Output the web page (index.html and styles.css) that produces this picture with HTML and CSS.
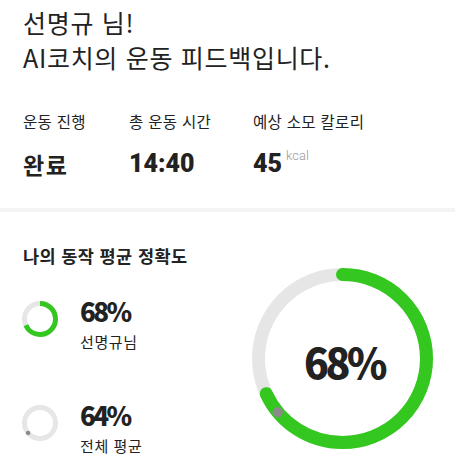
FILE: index.html
```html
<!DOCTYPE html>
<html lang="ko">
<head>
    <meta charset="UTF-8">
    <meta name="viewport" content="width=device-width, initial-scale=1.0">
    <title>AI코치 피드백</title>
    <link rel="stylesheet" href="styles.css">
</head>
<body>

<section class="summary">
    <h1 class="title">선명규 님!<br>AI코치의 운동 피드백입니다.</h1>
    <div class="stats">
        <div class="stat">
            <div class="stat-label">운동 진행</div>
            <div class="stat-value">완료</div>
        </div>
        <div class="stat">
            <div class="stat-label">총 운동 시간</div>
            <div class="stat-value num">14:40</div>
        </div>
        <div class="stat">
            <div class="stat-label">예상 소모 칼로리</div>
            <div class="stat-value num">45<span class="unit">kcal</span></div>
        </div>
    </div>
</section>

<div class="divider"></div>

<section class="accuracy">
    <div class="accuracy-left">
        <h2 class="section-title">나의 동작 평균 정확도</h2>

        <div class="acc-row">
            <svg class="mini-ring" width="36" height="36" viewBox="0 0 36 36">
                <circle cx="18" cy="18" r="15.5" fill="none" stroke="#e6e6e6" stroke-width="5"/>
                <circle cx="18" cy="18" r="15.5" fill="none" stroke="#33c71f" stroke-width="5"
                        stroke-dasharray="66.2 100" transform="rotate(-90 18 18)"/>
            </svg>
            <div class="acc-text">
                <div class="acc-num">68%</div>
                <div class="acc-label">선명규님</div>
            </div>
        </div>

        <div class="acc-row acc-row-second">
            <svg class="mini-ring" width="36" height="36" viewBox="0 0 36 36">
                <circle cx="18" cy="18" r="15.5" fill="none" stroke="#e6e6e6" stroke-width="5"/>
                <circle cx="6.1" cy="27.9" r="2.2" fill="#8a8a8a"/>
            </svg>
            <div class="acc-text">
                <div class="acc-num">64%</div>
                <div class="acc-label">전체 평균</div>
            </div>
        </div>
    </div>

    <div class="big-ring">
        <svg width="181" height="181" viewBox="0 0 181 181">
            <circle cx="90.5" cy="90.5" r="84" fill="none" stroke="#e6e6e6" stroke-width="13"/>
            <circle cx="90.5" cy="90.5" r="84" fill="none" stroke="#33c71f" stroke-width="13"
                    stroke-linecap="round" stroke-dasharray="358.9 600" transform="rotate(-90 90.5 90.5)"/>
            <!-- 전체 평균 위치 -->
            <circle cx="25.8" cy="144.1" r="5.2" fill="#8a8a8a"/>
        </svg>
        <div class="big-num">68%</div>
    </div>
</section>

</body>
</html>
```

FILE: styles.css
```css
body {
    font-family: "Noto Sans CJK KR", "Noto Sans", sans-serif;
    margin: 0;
    padding: 0;
    background-color: white;
    color: #222;
}

.summary {
    padding: 5px 22px 30px 23px;
}

.title {
    margin: 0;
    font-size: 25px;
    font-weight: 400;
    line-height: 35px;
    letter-spacing: 0.7px;
}

.stats {
    display: grid;
    grid-template-columns: 106px 124px auto;
    margin-top: 36px;
}

.stat-label {
    font-size: 15.5px;
    line-height: 20px;
    letter-spacing: 0.3px;
    color: #222;
}

.stat-value {
    margin-top: 19px;
    font-size: 23px;
    font-weight: 700;
    line-height: 28px;
    letter-spacing: 1.5px;
}

.stat-value.num {
    font-family: Roboto, sans-serif;
    font-size: 25px;
    font-weight: 900;
    letter-spacing: 0;
}

.unit {
    margin-left: 4px;
    font-family: Roboto, sans-serif;
    font-size: 13px;
    font-weight: 300;
    color: #9a9a9a;
    vertical-align: top;
    line-height: 12px;
}

.divider {
    height: 4px;
    background-color: #f4f4f4;
}

.accuracy {
    display: flex;
    justify-content: space-between;
    align-items: flex-start;
    padding: 32px 22px 0 22px;
}

.section-title {
    margin: 0 0 0 1px;
    font-size: 17.5px;
    font-weight: 700;
    line-height: 24px;
    letter-spacing: 0.4px;
}

.acc-row {
    display: flex;
    align-items: flex-start;
    gap: 22px;
    margin-top: 28px;
}

.acc-row-second {
    margin-top: 48px;
}

.mini-ring {
    margin-top: 5px;
    flex: none;
}

.acc-num {
    font-size: 26px;
    font-weight: 900;
    line-height: 30px;
    letter-spacing: -2.6px;
}

.acc-label {
    margin-top: 6px;
    font-size: 15px;
    line-height: 20px;
    letter-spacing: 0.6px;
}

.big-ring {
    display: grid;
    place-items: center;
    margin-top: 24px;
}

.big-ring svg,
.big-num {
    grid-area: 1 / 1;
}

.big-num {
    font-size: 41px;
    font-weight: 900;
    letter-spacing: -3.5px;
    padding-top: 5px;
    padding-left: 3px;
}
```
